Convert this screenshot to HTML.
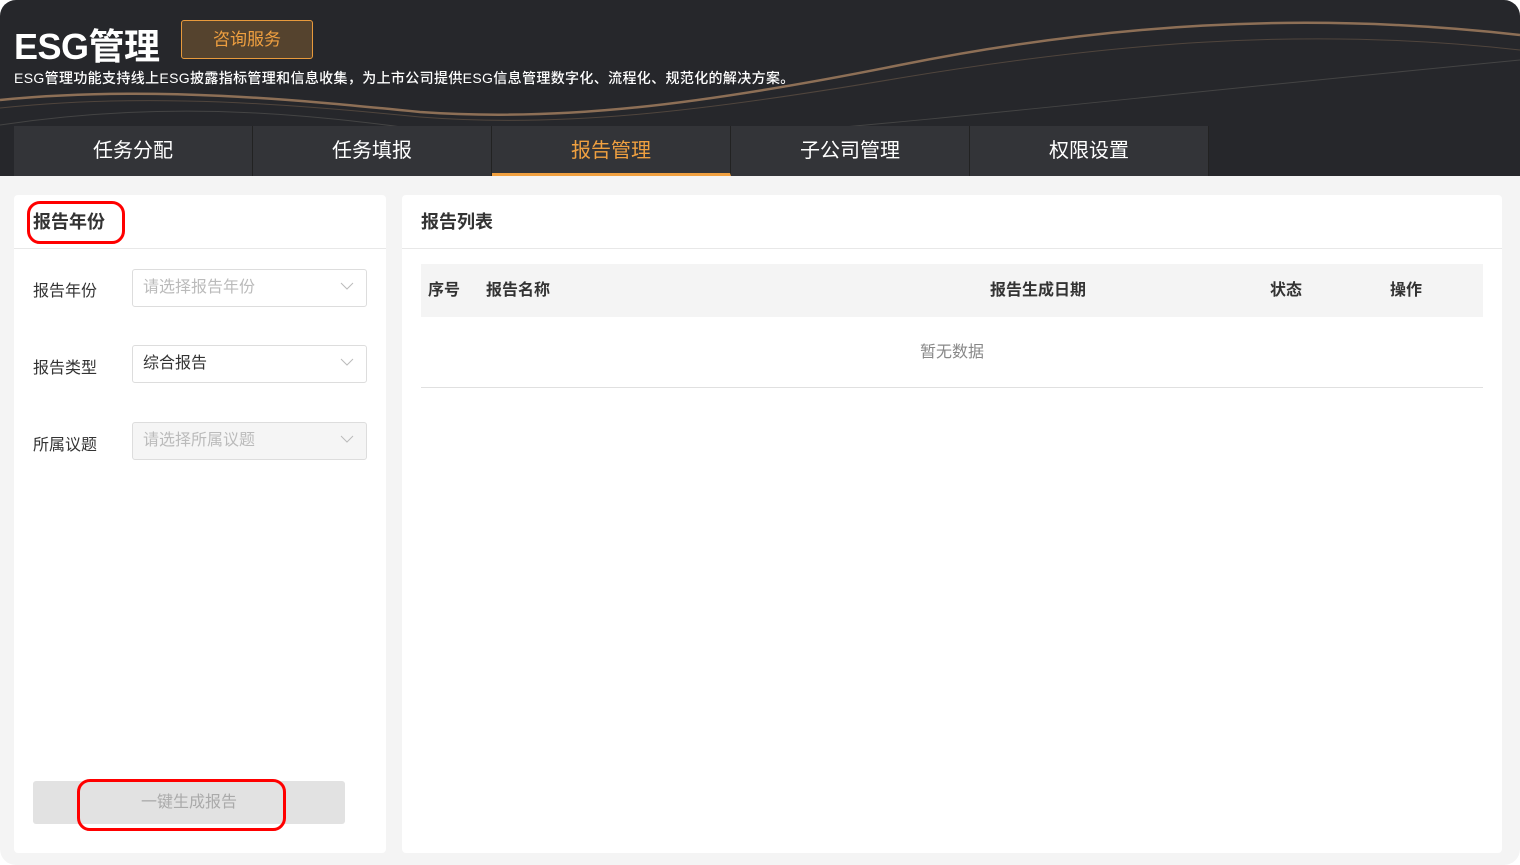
<!DOCTYPE html>
<html><head><meta charset="utf-8"><style>
*{margin:0;padding:0;box-sizing:border-box}
body{width:1520px;height:865px;background:#fff;font-family:"Liberation Sans","Noto Sans CJK SC",sans-serif;overflow:hidden}
.wrap{position:absolute;left:0;top:0;width:1520px;height:865px;background:#f4f4f4;border-radius:16px;overflow:hidden}
.hdr{position:absolute;left:0;top:0;width:1520px;height:176px;background:#26272b;overflow:hidden}
.title{position:absolute;left:14px;top:18px;color:#fff;font-size:36px;font-weight:bold;letter-spacing:-0.5px}
.btn{position:absolute;left:181px;top:20px;width:132px;height:39px;border:1px solid #e89a3c;border-radius:3px;background:#55432e;color:#f0a040;font-size:17px;text-align:center;line-height:37px}
.desc{position:absolute;left:14px;top:68px;color:#fff;font-size:14px;letter-spacing:0.35px;font-weight:500}
.tabs{position:absolute;left:14px;top:126px;height:50px;display:flex}
.tab{width:239px;height:50px;background:#333438;color:#fff;font-size:20px;text-align:center;line-height:50px;border-right:1px solid #222}
.tab.on{color:#f0a040;border-bottom:3px solid #f0a040;line-height:50px}
.panel{position:absolute;background:#fff;border-radius:4px}
.ph{height:54px;border-bottom:1px solid #e8e8e8;font-size:18px;font-weight:bold;color:#333;line-height:54px;padding-left:19px}
.lab{position:absolute;left:19px;font-size:16px;color:#333}
.sel{position:absolute;left:118px;width:235px;height:38px;border:1px solid #ddd;border-radius:3px;font-size:16px;line-height:36px;padding-left:10px;color:#bbb}
.sel svg{position:absolute;right:12px;top:12px}
.th{position:absolute;font-size:16px;font-weight:bold;color:#333;top:81px}
</style></head><body><div class="wrap">
<div class="hdr">
<svg width="1520" height="176" style="position:absolute;left:0;top:0">
<path d="M0 100 C150 85 300 100 420 112 C560 122 700 105 900 65 C1100 25 1300 10 1520 35" stroke="#a88262" stroke-width="2.5" fill="none" opacity=".8"/>
<path d="M0 108 C150 92 300 105 420 117 C560 128 700 112 900 78 C1100 45 1300 25 1520 50" stroke="#6c5a4a" stroke-width="1" fill="none" opacity=".6"/>
<path d="M0 125 C200 95 350 120 500 140 C700 150 900 120 1520 60" stroke="#444" stroke-width="1" fill="none"/>
</svg>
<div class="title">ESG管理</div>
<div class="btn">咨询服务</div>
<div class="desc">ESG管理功能支持线上ESG披露指标管理和信息收集，为上市公司提供ESG信息管理数字化、流程化、规范化的解决方案。</div>
<div class="tabs"><div class="tab">任务分配</div><div class="tab">任务填报</div><div class="tab on">报告管理</div><div class="tab">子公司管理</div><div class="tab">权限设置</div></div>
</div>
<div class="panel" style="left:14px;top:195px;width:372px;height:658px">
<div class="ph">报告年份</div>
<div style="position:absolute;left:13px;top:6px;width:98px;height:43px;border:3px solid #f00;border-radius:13px"></div>
<div class="lab" style="top:82px">报告年份</div>
<div class="sel" style="top:74px">请选择报告年份<svg width="14" height="8"><path d="M1 1l6 6 6-6" stroke="#bbb" fill="none"/></svg></div>
<div class="lab" style="top:159px">报告类型</div>
<div class="sel" style="top:150px;color:#333">综合报告<svg width="14" height="8"><path d="M1 1l6 6 6-6" stroke="#bbb" fill="none"/></svg></div>
<div class="lab" style="top:236px">所属议题</div>
<div class="sel" style="top:227px;background:#f5f5f5">请选择所属议题<svg width="14" height="8"><path d="M1 1l6 6 6-6" stroke="#bbb" fill="none"/></svg></div>
<div style="position:absolute;left:19px;top:586px;width:312px;height:43px;background:#e2e2e2;border-radius:3px;color:#aaa;font-size:16px;text-align:center;line-height:43px">一键生成报告</div>
<div style="position:absolute;left:63px;top:584px;width:209px;height:52px;border:3px solid #f00;border-radius:13px"></div>
</div>
<div class="panel" style="left:402px;top:195px;width:1100px;height:658px">
<div class="ph">报告列表</div>
<div style="position:absolute;left:19px;top:69px;width:1062px;height:53px;background:#f4f4f4"></div>
<div class="th" style="left:26px">序号</div><div class="th" style="left:84px">报告名称</div><div class="th" style="left:588px">报告生成日期</div><div class="th" style="left:868px">状态</div><div class="th" style="left:988px">操作</div>
<div style="position:absolute;left:19px;top:122px;width:1062px;height:71px;border-bottom:1px solid #e0e0e0;text-align:center;line-height:72px;color:#888;font-size:16px">暂无数据</div>
</div>
</div></body></html>
